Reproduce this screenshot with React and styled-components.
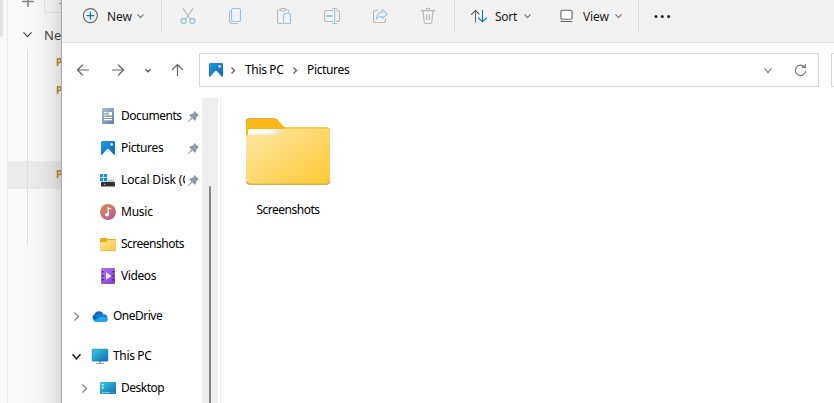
import React from "react";
import styled, { createGlobalStyle } from "styled-components";

const Global = createGlobalStyle`
  *{box-sizing:border-box}
  body{margin:0;overflow:hidden;background:#fff}
  svg{display:block;flex:none;overflow:visible}
`;
const Screen = styled.div`
  width:834px;height:403px;display:flex;overflow:hidden;
  font:12px/16px "Noto Sans","Open Sans",sans-serif;color:#000;white-space:nowrap;
`;
const Backdrop = styled.aside`
  width:61px;height:403px;flex:none;display:flex;background:#f9f9f9;position:relative;overflow:hidden;
  &::after{content:"";position:absolute;inset:0 0 0 28px;
    background:linear-gradient(90deg,rgba(0,0,0,0),rgba(0,0,0,.025) 45%,rgba(0,0,0,.065) 75%,rgba(0,0,0,.13));}
`;
const Gutter = styled.div`
  width:8px;flex:none;border-right:1px solid #ebebeb;
  &::before{content:"";display:block;width:3px;height:37px;background:#e2e2e2;border-radius:0 0 3px 0;}
`;
const Tree = styled.div`width:53px;overflow:hidden;`;
const TreeTop = styled.div`height:13px;display:flex;padding-left:14px;gap:10px;`;
const TabEdge = styled.div`width:40px;height:13px;border:solid #e7e7e7;border-width:0 0 1px 1px;padding-left:12px;`;
const TreeHead = styled.div`
  height:36px;display:flex;align-items:center;padding:7px 0 0 15px;gap:12px;
  font-size:13px;color:#444;
  svg{margin-top:-1px}
`;
const Branch = styled.div`height:196px;`;
const Leaf = styled.div`
  height:28px;padding:5px 0 0 48px;position:relative;background:${p => p.$on ? "#ebebeb" : "transparent"};
  font-size:10px;font-weight:700;color:#b5882c;
  &::before{content:"";position:absolute;left:19px;top:0;bottom:0;width:1px;background:#dedede;}
`;
const Explorer = styled.main`
  width:773px;flex:none;border-left:1px solid #acacac;background:#fff;display:flex;flex-direction:column;overflow:hidden;
`;
const Toolbar = styled.header`
  height:43px;flex:none;background:#f2f2f2;border-bottom:1px solid #dedede;display:flex;align-items:flex-start;color:#1b1b1b;
`;
const Command = styled.div`
  width:${p => p.$w}px;height:32px;display:flex;align-items:center;padding-left:${p => p.$pad}px;flex:none;
`;
const Label = styled.span`
  width:${p => p.$w}px;margin-left:${p => p.$ml || 0}px;letter-spacing:${p => p.$ls || 0}px;
  position:relative;top:${p => p.$top || 0}px;flex:none;overflow:${p => p.$clip ? "hidden" : "visible"};
`;
const Divider = styled.div`width:1px;height:32px;background:#dfdfdf;flex:none;`;
const ToolGroup = styled.div`display:flex;width:292px;padding-left:2px;flex:none;`;
const ToolIcon = styled.div`width:48px;height:32px;display:flex;align-items:center;justify-content:center;`;
const Nav = styled.nav`height:55px;flex:none;padding:10px 0 0 15px;display:flex;`;
const NavIcon = styled.div`width:${p => p.$w}px;height:34px;display:flex;align-items:center;flex:none;`;
const Address = styled.div`
  width:620px;height:34px;border:1px solid #d9d9d9;display:flex;align-items:center;padding-left:9px;flex:none;
`;
const AddressTools = styled.div`margin-left:auto;margin-right:11px;display:flex;gap:22px;align-items:center;`;
const Search = styled.div`width:30px;height:34px;margin-left:12px;border:1px solid #d9d9d9;flex:none;`;
const Body = styled.div`flex:1;display:flex;min-height:0;`;
const Sidebar = styled.div`width:140px;padding-top:2px;overflow:hidden;`;
const Row = styled.div`
  height:32px;display:flex;align-items:center;margin-top:${p => p.$gap ? 8 : 0}px;padding-left:${p => p.$indent}px;
`;
const Slot = styled.div`width:${p => p.$w}px;flex:none;display:flex;align-items:center;`;
const Track = styled.div`width:16px;background:#efefef;padding:88px 0 0 7px;`;
const Thumb = styled.div`width:2px;height:217px;background:#858585;border-radius:1px 1px 0 0;`;
const Content = styled.section`flex:1;margin-left:2px;border-left:1px solid #f0f0f0;padding:20px 0 0 25px;`;
const Tile = styled.figure`margin:0;width:84px;display:flex;flex-direction:column;align-items:center;`;
const Caption = styled.figcaption`margin-top:17px;letter-spacing:-.5px;`;
const Inset = styled.div`width:21px;padding-left:${p => p.$pad || 0}px;flex:none;`;

const Chevron = ({ w = 8, h = 4, c = "#777", s = 1.1 }) => (
  <svg width={w} height={h} viewBox={`0 0 ${w} ${h}`} fill="none" stroke={c} strokeWidth={s}><path d={`M.5 .3 ${w / 2} ${h - .3} ${w - .5} .3`} /></svg>
);
const Right = ({ c = "#666", w = 4, h = 7, s = 1.4 }) => (
  <svg width={w} height={h} fill="none" stroke={c} strokeWidth={s}><path d={`M.5 .4 ${w - .5} ${h / 2} .5 ${h - .4}`} /></svg>
);
const Line = ({ children, c = "#666", s = 1.1, w = 16 }) => (
  <svg width={w} height={w} viewBox={`0 0 ${w} ${w}`} fill="none" stroke={c} strokeWidth={s} strokeLinecap="round" strokeLinejoin="round">{children}</svg>
);
const G = "#b9b9b9", B = "#91c5ea";

const Cut = () => <Line c={G}><path d="M3.2.6 10.2 11M12.8.6 5.8 11" /><g stroke={B} strokeWidth="1.3"><circle cx="3.6" cy="13" r="2.5" /><circle cx="12.4" cy="13" r="2.5" /></g></Line>;
const Copy = () => <Line c={G}><path d="M2.5 3Q1.5 3.5 1.5 5V12.5Q1.5 15.5 4.5 15.5H9.5" /><rect x="3.5" y=".5" width="9" height="13" rx="1.7" stroke={B} /></Line>;
const Paste = () => <Line c={G}><path d="M4 1.8H3Q1.5 1.8 1.5 3.3V14Q1.5 15.5 3 15.5H6.5M10 1.8H11Q12.5 1.8 12.5 3.3V4" /><rect x="4.2" y=".6" width="5.6" height="2.4" rx="1.2" /><rect x="7.5" y="5.5" width="7" height="10" rx="1.3" stroke={B} /></Line>;
const Rename = () => <Line c={G}><path d="M8.8 2.5H2.5Q.5 2.5 .5 4.5V11.5Q.5 13.5 2.5 13.5H8.8M12.7 2.5H13.5Q15.5 2.5 15.5 4.5V11.5Q15.5 13.5 13.5 13.5H12.7" /><g stroke={B}><path d="M8.6.5H12.6M8.6 15.5H12.6M10.6.5V15.5" /><path d="M3.2 8H7.8" strokeWidth="1.8" /></g></Line>;
const Share = () => <Line c={G}><path d="M5.5 2.5H3.5Q1.5 2.5 1.5 4.5V12.5Q1.5 14.5 3.5 14.5H11.5Q13.5 14.5 13.5 12.5V11" /><path stroke={B} d="M10.2 1.7 15.3 6.2 10.2 10.5V8.2Q6.8 8 4.3 10.8 5.2 4.4 10.2 4.2Z" /></Line>;
const Trash = () => <Line c={G} s={1.2}><path d="M1.3 2.7H14.7M3 3 4.2 14Q4.4 15.5 6 15.5H10Q11.6 15.5 11.8 14L13 3M5.8 2.5Q6-.1 8 .4 10-.1 10.2 2.5M6.7 6.5V11.5M9.3 6.5V11.5" /></Line>;

const PictureIcon = () => (
  <svg width="14" height="14" viewBox="0 0 14 14"><defs><linearGradient id="pic" x2="1" y2="1"><stop stopColor="#2098dc" /><stop offset="1" stopColor="#0766bd" /></linearGradient></defs>
    <rect width="14" height="14" rx="1.2" fill="url(#pic)" /><path d="M.8 14 6.2 8Q7 7.3 7.8 8L13.2 14Z" fill="#f5faff" /><circle cx="10.6" cy="3.4" r="1.3" fill="#d5edff" /></svg>
);
const DocumentIcon = () => (
  <svg width="12" height="16" viewBox="0 0 12 16"><defs><linearGradient id="doc" x2="1" y2="1"><stop stopColor="#a9bdcf" /><stop offset="1" stopColor="#6682a6" /></linearGradient></defs>
    <rect width="12" height="16" rx="1" fill="url(#doc)" /><path d="M2 4.5H5.5M2 7H5.5M2 9.5H10M2 11.6H10" stroke="#fff" strokeWidth="1.1" /><rect x="6.5" y="4" width="3.5" height="3.5" fill="#fff" /></svg>
);
const DiskIcon = () => (
  <svg width="16" height="13" viewBox="0 0 16 13"><path d="M0 0H3.2V3.2H0ZM4 0H7.2V3.2H4ZM0 4H3.2V7.2H0ZM4 4H7.2V7.2H4Z" fill="#1491df" /><path d="M8 5.5H13L15 8H1L2 7.5H8Z" fill="#c5c8ca" /><rect x="1" y="8" width="14" height="4.5" rx=".6" fill="#303336" /><circle cx="4.6" cy="10.2" r=".7" fill="#50ed64" /></svg>
);
const MusicIcon = () => (
  <svg width="16" height="16" viewBox="0 0 16 16"><defs><linearGradient id="mus" x2=".7" y2="1"><stop stopColor="#e48b4e" /><stop offset="1" stopColor="#b0629b" /></linearGradient></defs>
    <circle cx="8" cy="8" r="8" fill="url(#mus)" /><path d="M8.2 3V10.6M8.2 3.7 11 5" stroke="#fff" strokeWidth="1.3" /><ellipse cx="7" cy="10.8" rx="1.9" ry="1.7" fill="#fff" /></svg>
);
const FolderIcon = () => (
  <svg width="16" height="13" viewBox="0 0 16 13"><defs><linearGradient id="fsm" x2="1" y2="1"><stop stopColor="#ffe697" /><stop offset="1" stopColor="#ffc83e" /></linearGradient></defs>
    <path d="M0 1Q0 0 1 0H6L8 1H15Q16 1 16 2V6H0Z" fill="#f4ad10" /><path d="M0 4H6L8 2H15Q16 2 16 3V12Q16 13 15 13H1Q0 13 0 12Z" fill="url(#fsm)" /><path d="M.5 12.7H15.5" stroke="#dda83b" strokeWidth=".6" /></svg>
);
const VideoIcon = () => (
  <svg width="14" height="16" viewBox="0 0 14 16"><defs><linearGradient id="vid" x2="1" y2="1"><stop stopColor="#b877ef" /><stop offset="1" stopColor="#803dd4" /></linearGradient></defs>
    <rect width="14" height="16" rx="1" fill="url(#vid)" /><path d="M1 3H2.6V4.6H1ZM1 7H2.6V8.6H1ZM1 11H2.6V12.6H1ZM11.4 3H13V4.6H11.4ZM11.4 7H13V8.6H11.4ZM11.4 11H13V12.6H11.4Z" fill="#402078" /><path d="M5 4.3 10.4 8 5 11.7Z" fill="#f4eaff" /></svg>
);
const CloudIcon = () => (
  <svg width="16" height="11" viewBox="0 0 16 11"><path d="M3 9.5A3.2 3.2 0 0 1 2.3 3.5 4.8 4.8 0 0 1 11.3 3.2L7 8Z" fill="#0765b8" /><path d="M5 3Q9 2 11.3 3.2A3.8 3.8 0 0 1 15.5 6L9 9.5 2.3 4Q3.5 3 5 3Z" fill="#127ed3" /><path d="M1.2 9.6 8 5.9 15.4 6.2Q16.4 8 15.6 9.4 14.7 11 13 11H3.8Q2 11 1.2 9.6Z" fill="#2aa4ea" /></svg>
);
const PcIcon = () => (
  <svg width="16" height="15" viewBox="0 0 16 15"><defs><linearGradient id="pc" x2="1" y2="1"><stop stopColor="#35d0e2" /><stop offset="1" stopColor="#1266b1" /></linearGradient></defs>
    <path d="M7 12H9V14H12V15H4V14H7Z" fill="#a3adb8" /><rect width="16" height="12.2" rx=".8" fill="url(#pc)" stroke="#22779d" strokeWidth=".4" /></svg>
);
const DesktopIcon = () => (
  <svg width="16" height="12" viewBox="0 0 16 12"><rect width="16" height="12" rx=".9" fill="url(#pc)" /><path d="M2 2H3.5V3.5H2ZM2 5H3.5V6.5H2Z" fill="#fff" /><path d="M2 10.7H10M11.5 10.7H12.5M13.5 10.7H14.5" stroke="#a6e6ff" strokeWidth=".8" /></svg>
);
const Pin = () => (
  <svg width="11" height="11" viewBox="0 0 11 11"><path d="M6.5 0 11 4.5 9.7 5 8.3 6.5 7.8 8.9 6.8 9.8 4.5 7.5.6 11 0 10.4 3.5 6.5 1.2 4.2 2.1 3.2 4.5 2.8 6 1.3Z" fill="#8d9ba6" /></svg>
);
const BigFolder = () => (
  <svg width="84" height="67" viewBox="0 0 84 67"><defs>
    <linearGradient id="front" x2="1" y2="1"><stop stopColor="#ffe9a6" /><stop offset="1" stopColor="#ffc733" /></linearGradient>
    <linearGradient id="paper" x2="1"><stop stopColor="#fff" /><stop offset=".6" stopColor="#f8f8f5" /><stop offset="1" stopColor="#e2dcc6" /></linearGradient></defs>
    <path d="M0 3Q0 .5 3 .5H27Q30 .5 32 2.2L37 7.8Q38.4 9.3 40.5 9.3H80Q84 9.3 84 13V30H0Z" fill="#fcb817" />
    <path d="M2 13Q2 11 4 11H38L31 17H2Z" fill="url(#paper)" />
    <path d="M0 19Q0 16.5 3 16.5H29Q31.5 16.5 33 15L36.5 11.8Q38 10.5 40 10.5H80Q84 10.5 84 14V63Q84 66.5 80 66.5H4Q0 66.5 0 63Z" fill="url(#front)" />
    <path d="M.6 63.5Q1.2 66.2 4 66.2H80Q83 66.2 83.5 63.5" fill="none" stroke="#cb9b36" strokeWidth="1.1" />
    <path d="M0 5Q0 .5 3 .5H27Q30 .5 32 2.2" fill="none" stroke="#c68b19" strokeWidth=".6" /></svg>
);

const places = [
  { name: "Documents", icon: <DocumentIcon />, pad: 2, pin: true, ls: -.45 },
  { name: "Pictures", icon: <PictureIcon />, pad: 1, pin: true, ls: -.35 },
  { name: "Local Disk (C:)", icon: <DiskIcon />, pin: true, ls: -.15 },
  { name: "Music", icon: <MusicIcon />, ls: -.25 },
  { name: "Screenshots", icon: <FolderIcon />, ls: -.5 },
  { name: "Videos", icon: <VideoIcon />, pad: 1, ls: -.4 },
];

export default function App() {
  return (
    <><Global /><Screen>
      <Backdrop>
        <Gutter />
        <Tree>
          <TreeTop><svg width="12" height="9"><path d="M6 0V7M0 1.5H12" stroke="#858585" strokeWidth="1.6" /></svg><TabEdge><svg width="10" height="6"><path d="M2 3.5H10" stroke="#999" /></svg></TabEdge></TreeTop>
          <TreeHead><Chevron w={9} h={5} c="#444" s={1.2} /><span>New</span></TreeHead>
          <Branch>
            {[1, 1, 0, 0, 1, 0, 0].map((v, i) => <Leaf key={i} $on={i === 4}>{v ? "P" : ""}</Leaf>)}
          </Branch>
        </Tree>
      </Backdrop>
      <Explorer>
        <Toolbar>
          <Command $w={99} $pad={21}>
            <Line><circle cx="7.4" cy="7.6" r="7" /><path stroke="#0878ce" strokeWidth="1.3" d="M4 7.6H10.8M7.4 4.2V11" /></Line>
            <Label $w={30} $ml={8} $top={1} $ls={-.1}>New</Label><Chevron w={7} />
          </Command>
          <Divider />
          <ToolGroup>
            <ToolIcon><Cut /></ToolIcon><ToolIcon><Copy /></ToolIcon><ToolIcon><Paste /></ToolIcon>
            <ToolIcon><Rename /></ToolIcon><ToolIcon><Share /></ToolIcon><ToolIcon><Trash /></ToolIcon>
          </ToolGroup>
          <Divider />
          <Command $w={90} $pad={16}>
            <Line><path d="M4.5 14V2.5M.5 6.5 4.5 2.3 8 6" /><path stroke="#0878ce" d="M11.5 2.2V13.7M7.5 10 11.5 13.7 15.5 10" /></Line>
            <Label $w={29} $ml={8} $top={1} $ls={-.3}>Sort</Label><Chevron w={7} />
          </Command>
          <Command $w={93} $pad={15}>
            <Line><rect x=".9" y="2.2" width="11.2" height="9" rx="1.5" fill="#fff" /><path d="M1 13.5H12" /></Line>
            <Label $w={32} $ml={7} $top={1} $ls={-.1}>View</Label><Chevron w={7} />
          </Command>
          <Divider />
          <Command $w={50} $pad={15}><svg width="18" height="4" fill="#222"><circle cx="2" cy="2.5" r="1.5" /><circle cx="8.3" cy="2.5" r="1.5" /><circle cx="14.6" cy="2.5" r="1.5" /></svg></Command>
        </Toolbar>
        <Nav>
          <NavIcon $w={35}><Line w={12} s={1.2}><path d="M.5 6H11.5M5.5 1 .5 6 5.5 11" /></Line></NavIcon>
          <NavIcon $w={33}><Line w={12} s={1.2}><path d="M.5 6H11.5M6.5 1 11.5 6 6.5 11" /></Line></NavIcon>
          <NavIcon $w={27}><Chevron w={6} h={3} c="#555" s={1.4} /></NavIcon>
          <NavIcon $w={27}><Line w={12} s={1.2}><path d="M5.5 11.5V.5M.5 5.5 5.5.5 10.5 5.5" /></Line></NavIcon>
          <Address>
            <PictureIcon /><Command $w={22} $pad={8}><Right /></Command>
            <Label $w={48} $ls={-.35}>This PC</Label><Right /><Label $w={50} $ml={10} $ls={-.35}>Pictures</Label>
            <AddressTools><Chevron h={5} /><svg width="13" height="13" fill="none" stroke="#777" strokeWidth="1.2"><path d="M10.5 3A5.2 5.2 0 1 0 11.7 7M7.6 3.3H11.3V0" /></svg></AddressTools>
          </Address>
          <Search />
        </Nav>
        <Body>
          <Sidebar>
            {places.map(p => (
              <Row key={p.name} $indent={38}><Inset $pad={p.pad}>{p.icon}</Inset>
                <Label $w={p.pin ? 64 : 70} $clip={p.pin} $ls={p.ls}>{p.name}</Label>{p.pin && <Slot $w={14}><Inset $pad={2.5}><Pin /></Inset></Slot>}
              </Row>
            ))}
            <Row $gap $indent={12}><Slot $w={18}><Right w={5} h={9} c="#888" /></Slot><Slot $w={21}><CloudIcon /></Slot><Label $ls={-.5}>OneDrive</Label></Row>
            <Row $gap $indent={10}><Slot $w={20}><Chevron w={9} h={5} c="#222" s={1.6} /></Slot><Slot $w={21}><PcIcon /></Slot><Label $ls={-.35}>This PC</Label></Row>
            <Row $indent={20}><Slot $w={18}><Right w={5} h={9} c="#888" /></Slot><Slot $w={21}><DesktopIcon /></Slot><Label $ls={-.5}>Desktop</Label></Row>
          </Sidebar>
          <Track><Thumb /></Track>
          <Content><Tile><BigFolder /><Caption>Screenshots</Caption></Tile></Content>
        </Body>
      </Explorer>
    </Screen></>
  );
}
